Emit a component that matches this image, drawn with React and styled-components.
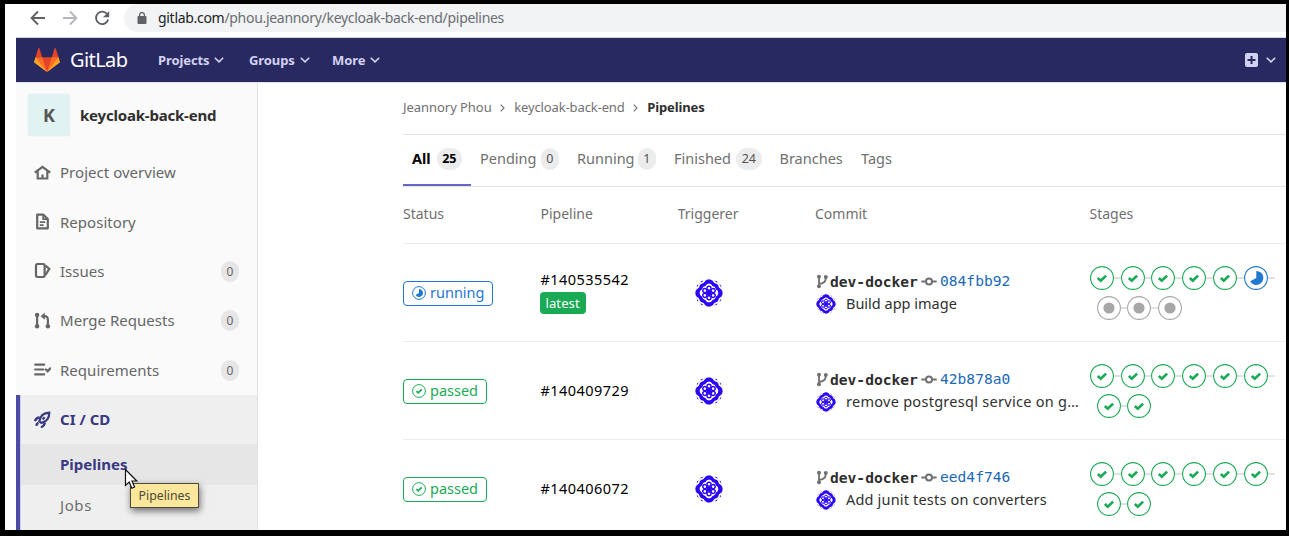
import React from "react";
import styled, { createGlobalStyle, css } from "styled-components";

const GlobalStyle = createGlobalStyle`
  * { box-sizing: border-box; }
  html, body { margin: 0; padding: 0; background: #000; }
  body { font-family: "Noto Sans", "Open Sans", sans-serif; color: #303030; overflow: hidden; }
`;

const Screen = styled.div`
  width: 1289px;
  height: 536px;
  padding: 4px 3px 6px 5px;
  background: #000;
`;

const Page = styled.div`
  display: flex;
  flex-direction: column;
  height: 526px;
  background: #fff;
  overflow: hidden;
`;

const BrowserBar = styled.div`
  display: flex;
  flex: none;
  align-items: flex-start;
  height: 33px;
  padding-left: 25px;
`;

const BarIcon = styled.svg`
  flex: none;
  width: 16px;
  height: 16px;
  margin: 6px 16px 0 0;
  fill: none;
  stroke: ${(p) => p.$color || "#5f6368"};
  stroke-width: 1.9;
`;

const UrlField = styled.div`
  display: flex;
  flex: 1;
  align-items: center;
  height: 28px;
  margin-left: -2px;
  padding: 0 0 1px 13px;
  border-radius: 14px 0 0 14px;
  background: #f1f3f4;
`;

const LockIcon = styled.svg`
  width: 10px;
  height: 12px;
  margin-right: 11px;
`;

const UrlText = styled.span`
  font-size: 14px;
  letter-spacing: -0.3px;
  white-space: nowrap;
  color: #6b6e72;
`;

const UrlHost = styled.span`
  color: #202124;
`;

const Site = styled.div`
  display: flex;
  flex: 1;
  flex-direction: column;
  min-height: 0;
  margin-left: 11px;
  border-top: 1px solid #d5d5d9;
`;

const NavBar = styled.header`
  display: flex;
  flex: none;
  align-items: center;
  height: 44px;
  padding: 0 10px 0 18px;
  background: #292961;
`;

const Logo = styled.svg`
  width: 26px;
  height: 24px;
`;

const Wordmark = styled.span`
  width: 88px;
  margin: -2px 0 0 10px;
  font-size: 20px;
  letter-spacing: -0.6px;
  color: #fff;
`;

const NavLink = styled.span`
  display: flex;
  align-items: center;
  width: ${(p) => p.$width}px;
  font-size: 13px;
  font-weight: 700;
  letter-spacing: -0.1px;
  color: #d1d1f0;
  margin-top: ${(p) => p.$lift || 0}px;
`;

const Chevron = styled.svg`
  width: 10px;
  height: 6px;
  margin-left: 5px;
  fill: none;
  stroke: #d1d1f0;
  stroke-width: 1.6;
`;

const NavTools = styled.div`
  display: flex;
  align-items: center;
  margin-left: auto;
`;

const PlusIcon = styled.svg`
  width: 13px;
  height: 14px;
  margin-right: 3px;
`;

const Body = styled.div`
  display: flex;
  flex: 1;
  min-height: 0;
  border-top: 1px solid #e1e1e6;
`;

const Sidebar = styled.aside`
  flex: none;
  width: 242px;
  border-right: 1px solid #e1e1e1;
  background: #fafafa;
`;

const ProjectHeader = styled.div`
  display: flex;
  align-items: center;
  height: 65px;
  padding: 0 0 1px 12px;
  font-size: 15px;
  font-weight: 700;
  letter-spacing: -0.2px;
  color: #2e2e2e;
`;

const ProjectBadge = styled.span`
  display: flex;
  align-items: center;
  justify-content: center;
  width: 42px;
  height: 42px;
  margin-right: 10px;
  border-radius: 3px;
  background: #e0f2f1;
  box-shadow: 0 0 1px #ccc;
  font-size: 18px;
  color: #555;
`;

const MenuItem = styled.div`
  display: flex;
  align-items: center;
  height: 49.4px;
  padding: 0 18px 1px 18px;
  font-size: 15px;
  letter-spacing: 0.03px;
  color: #666;
`;

const MenuIcon = styled.svg`
  width: 17px;
  height: 17px;
  margin-right: 9px;
  fill: none;
  stroke: currentColor;
  stroke-width: 2.2;
`;

const MenuCount = styled.span`
  width: 18px;
  height: 21px;
  margin: 1px 0 0 auto;
  border-radius: 9px;
  background: #e6e6e6;
  font-size: 12px;
  line-height: 21px;
  text-align: center;
`;

const ActiveGroup = styled.div`
  height: 140px;
  border-left: 4px solid #4b4ba3;
  box-shadow: inset 1px 0 0 #cfcfe6;
  background: #efefef;

  ${MenuItem} {
    padding-left: 14px;
    font-weight: 700;
    color: #393982;
  }
`;

const SubItem = styled.div`
  display: flex;
  align-items: center;
  height: 41px;
  padding: 0 0 2px 40px;
  font-size: 15px;
  letter-spacing: 0.6px;
  color: #707070;
  ${(p) =>
    p.$active &&
    css`
      padding-bottom: 1px;
      box-shadow: inset 1px 0 0 #cfcfe6;
      background: #e6e6e6;
      font-weight: 700;
      letter-spacing: 0;
      color: #393982;
    `}
`;

const Main = styled.main`
  flex: 1;
  min-width: 0;
  padding-left: 145px;
`;

const Breadcrumbs = styled.nav`
  display: flex;
  align-items: center;
  height: 52px;
  padding-bottom: 3px;
  border-bottom: 1px solid #e1e1e1;
  font-size: 13px;
  letter-spacing: -0.05px;
  color: #707070;
`;

const CrumbArrow = styled.svg`
  width: 5px;
  height: 8px;
  margin: 1px 9.5px 0 8px;
  fill: none;
  stroke: #777;
  stroke-width: 1.2;
`;

const CrumbLink = styled.span`
  letter-spacing: -0.12px;
`;

const Current = styled.strong`
  letter-spacing: -0.1px;
  color: #2e2e2e;
`;

const Tabs = styled.div`
  display: flex;
  height: 52px;
  border-bottom: 1px solid #e1e1e1;
`;

const Tab = styled.div`
  display: flex;
  align-items: center;
  width: ${(p) => p.$width}px;
  padding: 0 9px 5px;
  font-size: 14.5px;
  white-space: nowrap;
  color: #707070;
  ${(p) =>
    p.$active &&
    css`
      padding-bottom: 3px;
      border-bottom: 2px solid #6666c4;
      font-weight: 700;
      color: #000;
    `}
`;

const TabCount = styled.span`
  min-width: 18px;
  height: 22px;
  margin: 1px 0 0 auto;
  padding: 0 5.5px;
  border-radius: 11px;
  background: #ececec;
  font-size: 12.5px;
  line-height: 22px;
  text-align: center;
  color: ${(p) => (p.$active ? "#000" : "#555")};
`;

const TableRow = styled.div`
  display: grid;
  grid-template-columns: 137.5px 137.2px 137.3px 274.5px 1fr;
  align-items: center;
  height: 98px;
  border-bottom: 1px solid #ececec;
`;

const HeadRow = styled(TableRow)`
  height: 57px;
  padding-bottom: 3px;
  font-size: 14px;
  color: #707070;
`;

const STATUS_COLORS = { passed: "#1aaa55", running: "#1f78d1" };

const StatusBadge = styled.span`
  display: inline-flex;
  align-items: center;
  width: ${(p) => (p.$status === "running" ? 90 : 84)}px;
  height: 25px;
  margin-top: 1px;
  padding: 0 0 2px 8px;
  border: 1px solid ${(p) => STATUS_COLORS[p.$status]};
  border-radius: 4px;
  font-size: 14.5px;
  line-height: 20px;
  color: ${(p) => STATUS_COLORS[p.$status]};
`;

const BadgeIcon = styled.svg`
  width: 14px;
  height: 14px;
  margin: 1px 4px 0 0;
`;

const PipelineCell = styled.div`
  display: flex;
  flex-direction: column;
  align-items: flex-start;
  padding-bottom: 2px;
  font-size: 14.5px;
  line-height: 20px;
  letter-spacing: 0.45px;
  color: #000;
`;

const LatestTag = styled.span`
  height: 22px;
  margin-top: 3px;
  margin-left: -1px;
  padding: 0 6px;
  border-radius: 4px;
  background: #1aaa55;
  font-size: 13px;
  line-height: 22px;
  letter-spacing: 0.1px;
  color: #fff;
`;

const Avatar = styled.svg`
  flex: none;
  width: ${(p) => p.$size}px;
  height: ${(p) => p.$size}px;
  border-radius: 50%;
  margin-left: ${(p) => p.$indent || 0}px;
`;

const CommitCell = styled.div`
  padding-left: 1px;
`;

const CommitRef = styled.div`
  display: flex;
  align-items: center;
  height: 22px;
  font-family: "DejaVu Sans Mono", "Liberation Mono", monospace;
  font-size: 14.6px;
`;

const CommitIcon = styled.svg`
  width: ${(p) => p.$width}px;
  height: 15px;
  fill: none;
  stroke: #707070;
  stroke-width: 2;
`;

const Branch = styled.strong`
  width: 92px;
  padding-left: 1px;
  color: #2e2e2e;
`;

const Sha = styled.span`
  margin: -1px 0 0 3px;
  color: #1b69b6;
`;

const CommitTitle = styled.div`
  display: flex;
  align-items: center;
  height: 23px;
  font-size: 14.5px;
  letter-spacing: ${(p) => p.$spacing || 0}px;
  white-space: nowrap;
  color: #303030;

  ${Avatar} {
    margin-right: 10px;
  }
`;

const TitleText = styled.span`
  margin-top: -1px;
`;

const Stages = styled.div`
  display: flex;
  flex-wrap: wrap;
  row-gap: 6.5px;
  width: 192px;
  margin: 1px 0 0 0.5px;
`;

const Stage = styled.span`
  position: relative;
  width: 24px;
  height: 24px;
  margin-left: 6.75px;

  &:first-child { margin-left: 0; }

  &:not(:last-child)::after {
    content: "";
    position: absolute;
    top: 11px;
    left: 24px;
    width: 7px;
    height: 2px;
    background: #e1e1e1;
  }

  svg { display: block; }
`;

const Pointer = styled.svg`
  position: absolute;
  left: 124px;
  top: 468px;
  width: 14px;
  height: 22px;
`;

const Tooltip = styled.div`
  position: absolute;
  left: 130px;
  top: 483px;
  width: 69px;
  height: 25px;
  border: 1px solid #4d4a3c;
  background: #fbe79c;
  box-shadow: 1px 3px 7px rgba(0, 0, 0, 0.55);
  font-size: 12.3px;
  line-height: 23px;
  text-align: center;
  color: #4c4838;
`;

const ICONS = {
  home: <path d="M.8 8.6 8.5 2.8l7.7 5.8M3.7 7.2v7.3h9.6V7.2M8.5 15v-4.5" />,
  repository: (
    <>
      <path d="M3.2 1.7h6.2l4.4 4.4v9.2H3.2z" strokeLinejoin="round" />
      <path d="M9.2 2v4.2h4.3M5.8 9.2h5.4M5.8 12.2h3.8" strokeWidth="1.7" />
    </>
  ),
  issues: (
    <>
      <rect x="2" y="2" width="8.6" height="13" rx="1.4" />
      <path d="M11.5 3.6 15.3 6.9 11.3 13.2" />
    </>
  ),
  merge: (
    <>
      <path d="M3.1 3v11M8 4.2h2.4q3.5 0 3.5 3.8v6" />
      <path d="M10.8 .6v7.2L6.6 4.2z" fill="currentColor" stroke="none" />
      <g fill="currentColor" stroke="none">
        <circle cx="3.1" cy="3" r="2.2" />
        <circle cx="3.1" cy="14.3" r="2.2" />
        <circle cx="13.9" cy="14.3" r="2.2" />
      </g>
    </>
  ),
  requirements: (
    <path d="M1.2 3.6h9M1.2 8.5h8.2M1.2 13.4h9M11.9 8.5l1.8 1.8 2.6-3" strokeLinecap="round" />
  ),
  rocket: (
    <>
      <path d="M5.3 10.2C6.2 5.2 9.8 2 15.3 1.7c0 5.4-3.2 9.1-8.1 10.2zM8.6 8.4l2.1-2.2" />
      <path d="M4.5 6.4Q2.3 6.8 1.3 9.2M10.6 12.7Q10 15 7.9 15.8M3.6 12.2 2.6 13.8" strokeLinecap="round" strokeWidth="2.5" />
    </>
  ),
};

const MENU = [
  { label: "Project overview", icon: "home" },
  { label: "Repository", icon: "repository" },
  { label: "Issues", icon: "issues", count: 0 },
  { label: "Merge Requests", icon: "merge", count: 0 },
  { label: "Requirements", icon: "requirements", count: 0 },
];

const TABS = [
  { label: "All", count: 25, width: 68, active: true },
  { label: "Pending", count: 0, width: 97 },
  { label: "Running", count: 1, width: 97 },
  { label: "Finished", count: 24, width: 105.5 },
  { label: "Branches", width: 81.5 },
  { label: "Tags", width: 60 },
];

const PASSED = Array(8).fill("passed");

const PIPELINES = [
  {
    id: "#140535542",
    status: "running",
    latest: true,
    sha: "084fbb92",
    title: "Build app image",
    stages: [...Array(5).fill("passed"), "running", "created", "created", "created"],
  },
  {
    id: "#140409729",
    status: "passed",
    sha: "42b878a0",
    title: "remove postgresql service on g…",
    spacing: 0.28,
    stages: PASSED,
  },
  {
    id: "#140406072",
    status: "passed",
    sha: "eed4f746",
    title: "Add junit tests on converters",
    spacing: 0.18,
    stages: PASSED,
  },
];

const QUATREFOIL =
  "M0-13.6C4-13.6 4.2-10.8 5.8-9.8 8-9.6 9.6-8 9.8-5.8 10.8-4.2 13.6-4 13.6 0S10.8 4.2 9.8 5.8C9.6 8 8 9.6 5.8 9.8 4.2 10.8 4 13.6 0 13.6S-4.2 10.8-5.8 9.8C-8 9.6-9.6 8-9.8 5.8-10.8 4.2-13.6 4-13.6 0S-10.8-4.2-9.8-5.8C-9.6-8-8-9.6-5.8-9.8-4.2-10.8-4-13.6 0-13.6Z";

function Caret() {
  return (
    <Chevron viewBox="0 0 10 6">
      <path d="M.8 .7 5 4.9 9.2 .7" />
    </Chevron>
  );
}

function Identicon({ size, indent }) {
  return (
    <Avatar viewBox="-14 -14 28 28" $size={size} $indent={indent}>
      <circle r="13.6" fill="#fff" stroke="#ddd" strokeWidth=".7" />
      <path d={QUATREFOIL} fill="#2a08f5" />
      {[0, 90, 180, 270].map((a) => (
        <path
          key={a}
          transform={`rotate(${a})`}
          d="M6.4-12.2 8.4-11.1M11.1-8.4 12.2-6.4"
          stroke="#2a08f5"
          strokeWidth="1.1"
        />
      ))}
      <path d={QUATREFOIL} transform="scale(.68)" fill="#fff" />
      <g fill="#fff" stroke="#2a08f5" strokeWidth="1.4">
        {[30, 90, 150, 210, 270, 330].map((a) => (
          <circle key={a} cx="4.8" r="2" transform={`rotate(${a})`} />
        ))}
      </g>
      <circle r="2.7" fill="#2a08f5" />
    </Avatar>
  );
}

function StatusIcon({ status }) {
  const color = STATUS_COLORS[status];
  return (
    <BadgeIcon viewBox="0 0 14 14" fill="none" stroke={color}>
      <circle cx="7" cy="7" r="6.4" />
      {status === "running" ? (
        <path d="M7 3a4 4 0 1 1-3.5 6L7 7z" fill={color} stroke="none" />
      ) : (
        <path d="M4.4 7.1 6.2 8.9 9.7 5.4" strokeWidth="1.7" />
      )}
    </BadgeIcon>
  );
}

function StageIcon({ status }) {
  const color = STATUS_COLORS[status] || "#a7a7a7";
  return (
    <svg width="24" height="24" viewBox="0 0 24 24" fill="none">
      <circle cx="12" cy="12" r="11.4" stroke={color} strokeWidth="1.1" fill="#fff" />
      {status === "passed" && <path d="M7.8 12 10.8 14.7 16.1 9.6" stroke={color} strokeWidth="2.7" />}
      {status === "running" && <path d="M12.3 5a7 7 0 1 1-6.1 10.3L12.3 12z" fill={color} />}
      {status === "created" && <circle cx="12" cy="12" r="5.6" fill={color} />}
    </svg>
  );
}

function PipelineRow({ pipeline }) {
  return (
    <TableRow>
      <div>
        <StatusBadge $status={pipeline.status}>
          <StatusIcon status={pipeline.status} />
          {pipeline.status}
        </StatusBadge>
      </div>
      <PipelineCell>
        {pipeline.id}
        {pipeline.latest && <LatestTag>latest</LatestTag>}
      </PipelineCell>
      <Identicon size={28} indent={17.5} />
      <CommitCell>
        <CommitRef>
          <CommitIcon $width={13} viewBox="0 0 13 15">
            <path d="M3 2.5v10M3 9.8Q9.8 9.5 9.8 4" strokeWidth="1.8" />
            <g fill="#707070" stroke="none">
              <circle cx="3" cy="2.8" r="2" />
              <circle cx="3" cy="12.3" r="2" />
              <circle cx="9.8" cy="3" r="2" />
            </g>
          </CommitIcon>
          <Branch>dev-docker</Branch>
          <CommitIcon $width={16} viewBox="0 0 16 15">
            <circle cx="8" cy="7.5" r="3" />
            <path d="M.3 7.5h4.5M11.2 7.5h4.5" />
          </CommitIcon>
          <Sha>{pipeline.sha}</Sha>
        </CommitRef>
        <CommitTitle $spacing={pipeline.spacing}>
          <Identicon size={20} />
          <TitleText>{pipeline.title}</TitleText>
        </CommitTitle>
      </CommitCell>
      <Stages>
        {pipeline.stages.map((s, i) => (
          <Stage key={i}>
            <StageIcon status={s} />
          </Stage>
        ))}
      </Stages>
    </TableRow>
  );
}

function TanukiLogo() {
  return (
    <Logo viewBox="0 1.2 36 33.3">
      <path fill="#e24329" d="M2 14l9.38 9v-9l-4-12.28c-.2-.63-1.18-.63-1.38 0zM34 14l-9.38 9v-9l4-12.28c.2-.63 1.18-.63 1.38 0zM18 34.38 3 14h30z" />
      <path fill="#fc6d26" d="M18 34.38 11.38 14H2l4 11zM18 34.38 24.62 14H34l-4 11z" />
      <path fill="#fca326" d="M2 14 .1 20.16c-.18.56 0 1.2.5 1.56L18 34.38zM34 14l1.9 6.16c.18.56 0 1.2-.5 1.56L18 34.38z" />
    </Logo>
  );
}

export default function App() {
  return (
    <Screen>
      <GlobalStyle />
      <Page>
        <BrowserBar>
          <BarIcon viewBox="0 0 16 16">
            <path d="M15 8H2M8 1.5 1.6 8 8 14.5" />
          </BarIcon>
          <BarIcon viewBox="0 0 16 16" $color="#b4b6b9">
            <path d="M1 8h13M8 1.5 14.4 8 8 14.5" />
          </BarIcon>
          <BarIcon viewBox="0 0 16 16">
            <path d="M13.4 4.4A6.2 6.2 0 1 0 14.2 9.6" />
            <path d="M15.2 1v6.3H9z" fill="#5f6368" stroke="none" />
          </BarIcon>
          <UrlField>
            <LockIcon viewBox="0 0 10 12">
              <rect x=".5" y="4" width="9" height="8" rx="1" fill="#5f6368" />
              <path d="M2.6 5V3a2.4 2.4 0 0 1 4.8 0v2" fill="none" stroke="#5f6368" strokeWidth="1.3" />
            </LockIcon>
            <UrlText>
              <UrlHost>gitlab.com</UrlHost>/phou.jeannory/keycloak-back-end/pipelines
            </UrlText>
          </UrlField>
        </BrowserBar>
        <Site>
          <NavBar>
            <TanukiLogo />
            <Wordmark>GitLab</Wordmark>
            <NavLink $width={91}>Projects<Caret /></NavLink>
            <NavLink $width={83}>Groups<Caret /></NavLink>
            <NavLink $width={60} $lift={-1}>More<Caret /></NavLink>
            <NavTools>
              <PlusIcon viewBox="0 0 13 14">
                <rect width="13" height="14" rx="2" fill="#d1d1f0" />
                <path d="M6.5 3v8M2.5 7h8" stroke="#292961" strokeWidth="2" />
              </PlusIcon>
              <Caret />
            </NavTools>
          </NavBar>
          <Body>
            <Sidebar>
              <ProjectHeader>
                <ProjectBadge>K</ProjectBadge>
                keycloak-back-end
              </ProjectHeader>
              {MENU.map((m) => (
                <MenuItem key={m.label}>
                  <MenuIcon viewBox="0 0 17 17">{ICONS[m.icon]}</MenuIcon>
                  {m.label}
                  {m.count !== undefined && <MenuCount>{m.count}</MenuCount>}
                </MenuItem>
              ))}
              <ActiveGroup>
                <MenuItem>
                  <MenuIcon viewBox="0 0 17 17">{ICONS.rocket}</MenuIcon>
                  CI / CD
                </MenuItem>
                <SubItem $active>Pipelines</SubItem>
                <SubItem>Jobs</SubItem>
              </ActiveGroup>
            </Sidebar>
            <Main>
              <Breadcrumbs>
                Jeannory Phou
                <CrumbArrow viewBox="0 0 5 8"><path d="M.7 .7 4 4 .7 7.3" /></CrumbArrow>
                <CrumbLink>keycloak-back-end</CrumbLink>
                <CrumbArrow viewBox="0 0 5 8"><path d="M.7 .7 4 4 .7 7.3" /></CrumbArrow>
                <Current>Pipelines</Current>
              </Breadcrumbs>
              <Tabs>
                {TABS.map((t) => (
                  <Tab key={t.label} $width={t.width} $active={t.active}>
                    {t.label}
                    {t.count !== undefined && <TabCount $active={t.active}>{t.count}</TabCount>}
                  </Tab>
                ))}
              </Tabs>
              <HeadRow>
                <span>Status</span>
                <span>Pipeline</span>
                <span>Triggerer</span>
                <span>Commit</span>
                <span>Stages</span>
              </HeadRow>
              {PIPELINES.map((p) => (
                <PipelineRow key={p.id} pipeline={p} />
              ))}
            </Main>
          </Body>
        </Site>
      </Page>
      <Tooltip>Pipelines</Tooltip>
      <Pointer viewBox="0 0 14 22">
        <path d="M1.5 1.5v16l3.7-3.4 2.6 6.1 2.8-1.2-2.6-6h4.8z" fill="#fff" stroke="#111" strokeWidth="1.2" />
      </Pointer>
    </Screen>
  );
}
